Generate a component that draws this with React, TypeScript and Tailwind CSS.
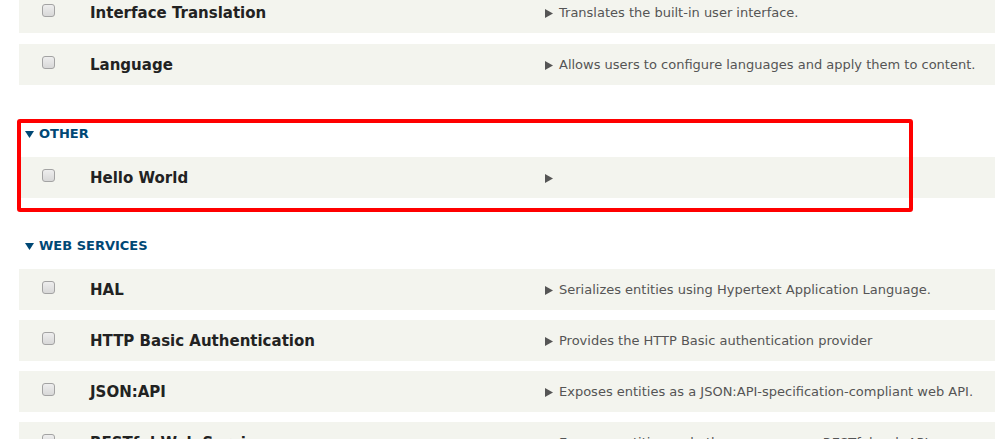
import React from "react";

const font = { fontFamily: '"DejaVu Sans", "Liberation Sans", sans-serif' };

function Checkbox() {
  return (
    <div className="mt-[12px] ml-[23px] h-[13px] w-[13px] shrink-0 rounded-[3px] border border-[#a3a3a3] bg-gradient-to-b from-[#eeeeee] to-[#d8d8d8]" />
  );
}

function Arrow() {
  return (
    <svg width="8" height="9" viewBox="0 0 8 9" className="mr-[6px] shrink-0">
      <polygon points="0,0 8,4.5 0,9" fill="#555555" />
    </svg>
  );
}

function Row({ title, desc }: { title: string; desc: string }) {
  return (
    <div className="flex h-[41px] w-full items-start bg-[#f3f4ee]">
      <div className="w-[71px] shrink-0">
        <Checkbox />
      </div>
      <div className="flex h-full w-[455px] shrink-0 items-center pt-[2px] text-[15px] font-bold text-[#222222]">
        {title}
      </div>
      <div className="flex h-full items-center whitespace-nowrap pt-[1px] text-[13px] text-[#555555]">
        <Arrow />
        <span>{desc}</span>
      </div>
    </div>
  );
}

function Header({ label, className }: { label: string; className: string }) {
  return (
    <div className={"flex h-[24px] items-center pl-[6px] text-[13px] font-bold text-[#004875] " + className}>
      <svg width="9" height="7" viewBox="0 0 9 7" className="mr-[5px] shrink-0">
        <polygon points="0,0 9,0 4.5,7" fill="#004875" />
      </svg>
      <span>{label}</span>
    </div>
  );
}

export default function App() {
  return (
    <div className="relative h-[439px] w-[995px] overflow-hidden bg-white" style={font}>
      <div className="flex flex-col pl-[19px]">
        <div className="-mt-[8px] flex flex-col gap-[11px]">
          <Row title="Interface Translation" desc="Translates the built-in user interface." />
          <Row title="Language" desc="Allows users to configure languages and apply them to content." />
        </div>
        <Header label="OTHER" className="mt-[37px] mb-[11px]" />
        <Row title="Hello World" desc="" />
        <Header label="WEB SERVICES" className="mt-[36px] mb-[11px]" />
        <div className="flex flex-col gap-[10px]">
          <Row title="HAL" desc="Serializes entities using Hypertext Application Language." />
          <Row title="HTTP Basic Authentication" desc="Provides the HTTP Basic authentication provider" />
          <Row title="JSON:API" desc="Exposes entities as a JSON:API-specification-compliant web API." />
          <Row title="RESTful Web Services" desc="Exposes entities and other resources as RESTful web API" />
        </div>
      </div>
      <div className="pointer-events-none absolute left-[17px] top-[119px] h-[93px] w-[896px] rounded-[3px] border-[4px] border-[#ff0000]" />
    </div>
  );
}
